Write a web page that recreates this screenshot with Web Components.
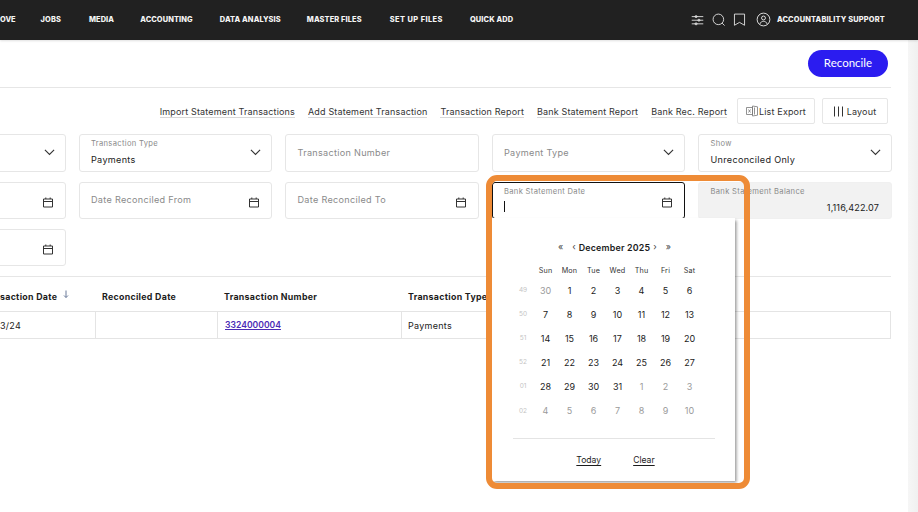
<!DOCTYPE html>
<html lang="en">
<head>
<meta charset="utf-8">
<title>Bank Reconciliation</title>
<style>
  html, body { margin: 0; height: 100%; overflow: hidden; background: #fff; }
  body { font-family: Inter, "Liberation Sans", sans-serif; color: #222; }
</style>
</head>
<body>
<app-header></app-header>
<rec-page></rec-page>
<highlight-box></highlight-box>

<script>
(() => {
  const ICONS = {
    sliders: '<path d="M1 5h16M1 10h16M1 15h16"/><circle cx="7" cy="5" r="1.4"/><circle cx="11" cy="10" r="1.4"/><circle cx="7" cy="15" r="1.4"/>',
    search: '<circle cx="8.8" cy="8.8" r="7.3"/><path d="m14 14 3.4 3.4"/>',
    bookmark: '<path d="M2 1.5h14V17l-7-4-7 4z"/>',
    user: '<circle cx="10" cy="10" r="8.5"/><circle cx="10" cy="8" r="2.6"/><path d="M5.4 15.8c.6-2.3 2.4-3.4 4.6-3.4s4 1.1 4.6 3.4"/>',
    calendar: '<path d="M1.5 3h9v8h-9zM1.5 5.5h9M3.8 1.5V3M8.2 1.5V3"/>',
    chevron: '<path d="m1 1 5 5 5-5"/>'
  };
  const svgIcon = (name, size, vb) => `<svg width="${size}" height="${size}" viewBox="0 0 ${vb} ${vb}" fill="none" stroke="currentColor" aria-hidden="true">${ICONS[name]}</svg>`;

  class AppHeader extends HTMLElement {
    connectedCallback() {
      const nav = ['OVE', 'JOBS', 'MEDIA', 'ACCOUNTING', 'DATA ANALYSIS', 'MASTER FILES', 'SET UP FILES', 'QUICK ADD'];
      const root = this.attachShadow({ mode: 'open' });
      root.innerHTML = `
        <style>
          :host {
            display: flex; align-items: center; height: 40px; box-sizing: border-box; padding-bottom: 1px;
            background: #212121; color: #f4f4f4;
            box-shadow: 0 1px 2px rgba(0,0,0,.12); position: relative; z-index: 2;
            font-family: Inter, "Liberation Sans", sans-serif;
            overflow: hidden;
          }
          nav { display: flex; gap: 27px; margin-left: 0; }
          span { font-size: 7.4px; font-weight: 800; letter-spacing: .12px; white-space: nowrap; }
          nav span:nth-child(1) { margin-right: -2px; letter-spacing: 0; }
          nav span:nth-child(3) { margin-left: 1px; margin-right: -1px; }
          nav span:nth-child(6) { margin-left: -1px; }
          nav span:nth-child(7) { margin-left: 1px; letter-spacing: .45px; }
          .right { display: flex; align-items: center; margin-left: auto; margin-right: 33px; }
          .right svg { display: block; stroke-width: 1.15; }
          .right .gap { margin-right: 8px; }
          .right .mark { margin-right: 10px; }
          .support { margin-left: 6px; letter-spacing: .18px; }
        </style>
        <nav>${nav.map((n) => `<span>${n}</span>`).join('')}</nav>
        <div class="right">
          <div class="gap">${svgIcon('sliders', 13, 18)}</div>
          <div class="gap">${svgIcon('search', 13, 18)}</div>
          <div class="mark">${svgIcon('bookmark', 13, 18)}</div>
          ${svgIcon('user', 15, 20)}
          <span class="support">ACCOUNTABILITY SUPPORT</span>
        </div>`;
    }
  }

  class FilterField extends HTMLElement {
    connectedCallback() {
      const label = this.getAttribute('label') || '';
      const value = this.getAttribute('value');
      const kind = this.getAttribute('kind') || 'text';
      const focused = this.hasAttribute('focused');
      const icon = kind === 'select' ? `<i class="chev">${svgIcon('chevron', 11, 12)}</i>`
        : kind === 'date' ? `<i class="cal">${svgIcon('calendar', 12, 12)}</i>` : '';
      let body;
      if (focused) body = `<small>${label}</small><b class="caret"></b>`;
      else if (kind === 'readonly') body = `<small>${label}</small><em class="num">${value}</em>`;
      else if (value) body = `<small>${label}</small><em>${value}</em>`;
      else body = label ? `<span class="ph">${label}</span>` : '';
      const root = this.attachShadow({ mode: 'open' });
      root.innerHTML = `
        <style>
          :host {
            display: flex; flex-direction: column; justify-content: flex-start; box-sizing: border-box; position: relative;
            border: 1px solid #e6e6e6; border-radius: 3px; padding: 0 11.5px; background: #fff;
            font-family: Inter, "Liberation Sans", sans-serif; min-width: 0;
          }
          :host([kind="readonly"]) { background: #f2f2f2; border-color: #f0f0f0; }
          :host([focused]) { border-color: #111; }
          small { font-size: 7.6px; line-height: 10px; margin-top: 3.5px; letter-spacing: .32px; color: #8a8a8a; white-space: nowrap; }
          em { font-style: normal; font-size: 9.1px; line-height: 13px; margin-top: 4.5px; letter-spacing: .3px; color: #222; white-space: nowrap; }
          em.num { text-align: right; letter-spacing: .1px; }
          .ph { font-size: 9.1px; line-height: 13px; letter-spacing: .3px; color: #8a8a8a; white-space: nowrap; margin-top: 11px; }
          :host([kind="date"]) .ph { margin-top: 10px; }
          b.caret { display: block; width: 1px; height: 11px; background: #111; margin-top: 4.5px; }
          i { position: absolute; color: #333; display: block; }
          i svg { display: block; stroke-width: 1; }
          .chev { top: 14px; right: 10px; }
          .chev svg { stroke-width: 1.2; }
          .cal { top: 13px; right: 11px; }
        </style>
        ${body}${icon}<slot></slot>`;
    }
  }

  class DatePopup extends HTMLElement {
    connectedCallback() {
      const weeks = ['49', '50', '51', '52', '01', '02'];
      const days = [30, 1, 2, 3, 4, 5, 6, 7, 8, 9, 10, 11, 12, 13, 14, 15, 16, 17, 18, 19, 20, 21, 22, 23, 24, 25, 26, 27, 28, 29, 30, 31, 1, 2, 3, 4, 5, 6, 7, 8, 9, 10];
      let cells = '<span></span>' + ['Sun', 'Mon', 'Tue', 'Wed', 'Thu', 'Fri', 'Sat'].map((d) => `<span class="dow">${d}</span>`).join('');
      days.forEach((d, i) => {
        if (i % 7 === 0) cells += `<span class="wk">${weeks[i / 7]}</span>`;
        const other = i === 0 || i > 31;
        cells += `<span class="day${other ? ' off' : ''}">${d}</span>`;
      });
      const root = this.attachShadow({ mode: 'open' });
      root.innerHTML = `
        <style>
          :host {
            display: block; position: absolute; left: -1px; top: 35px; width: 243px; height: 263px; box-sizing: border-box;
            background: #fff; padding: 21px 0 0 21px; z-index: 5;
            box-shadow: 1.5px 1.5px 3px rgba(0,0,0,.42);
            font-family: Inter, "Liberation Sans", sans-serif; color: #1c1c1c;
          }
          .nav { display: flex; align-items: center; justify-content: center; height: 16px; width: 202px; margin-left: 1px; margin-bottom: 7px; font-size: 9px; color: #444; }
          .nav b { font-size: 8.9px; font-weight: 600; letter-spacing: .2px; color: #1c1c1c; margin: 0 3px; white-space: nowrap; }
          .nav span { line-height: 16px; }
          .nav .l2 { margin-right: 9px; }
          .nav .r2 { margin-left: 9px; }
          .grid { display: grid; grid-template-columns: 21px repeat(7, 24px); grid-template-rows: 16px repeat(6, 24.1px); place-items: center; font-size: 9px; }
          .dow { font-size: 7.2px; letter-spacing: .2px; color: #333; }
          .wk { font-size: 6.5px; color: #c4c4c4; }
          .off { color: #9a9a9a; }
          hr { width: 202px; margin: 15px 0 0; border: 0; border-top: 1px solid #e4e4e4; }
          .foot { display: flex; justify-content: center; gap: 32px; width: 202px; height: 43px; align-items: center; padding-left: 4px; box-sizing: border-box; }
          .foot a { font-size: 8.6px; color: #1c1c1c; text-decoration: underline; text-underline-offset: 2px; }
        </style>
        <div class="nav"><span class="l2">«</span><span>‹</span><b>December 2025</b><span>›</span><span class="r2">»</span></div>
        <div class="grid">${cells}</div>
        <hr>
        <div class="foot"><a>Today</a><a>Clear</a></div>`;
    }
  }

  class ToolLink extends HTMLElement {
    connectedCallback() {
      this.attachShadow({ mode: 'open' }).innerHTML = `
        <style>
          :host { display: inline-block; font-size: 9px; letter-spacing: .16px; color: #333; white-space: nowrap; border-bottom: 1px solid #d8d8d8; line-height: 10px; padding-top: 2px; }
        </style><slot></slot>`;
    }
  }

  class ToolButton extends HTMLElement {
    connectedCallback() {
      this.attachShadow({ mode: 'open' }).innerHTML = `
        <style>
          :host { display: inline-flex; align-items: center; justify-content: center; gap: 4px; box-sizing: border-box; height: 26px; border: 1px solid #e6e6e6; border-radius: 2px; font-size: 9px; letter-spacing: .16px; color: #333; white-space: nowrap; background: #fff; }
          :host([tight]) { gap: 0; }
        </style><slot name="icon"></slot><slot></slot>`;
    }
  }

  class RecTable extends HTMLElement {
    connectedCallback() {
      const root = this.attachShadow({ mode: 'open' });
      root.innerHTML = `
        <style>
          :host { display: grid; grid-template-columns: 95px 122px 184px 1fr; grid-template-rows: 34px 28px; font-family: Inter, "Liberation Sans", sans-serif; color: #222; }
          div { display: flex; align-items: center; padding: 0 7px; white-space: nowrap; box-sizing: border-box; font-size: 9px; letter-spacing: .28px; min-width: 0; }
          .h { font-weight: 700; font-size: 8.8px; letter-spacing: .3px; color: #1c1c1c; padding-top: 5px; }
          .c { border-top: 1px solid #e4e4e4; border-bottom: 1px solid #e4e4e4; border-left: 1px solid #e4e4e4; padding-left: 6px; }
          .c:last-child { border-right: 1px solid #e4e4e4; }
          .first { padding-left: 0; border-left: 0; }
          a { color: #4b2bb5; text-decoration: underline; font-weight: 600; font-size: 8.6px; letter-spacing: 0; margin-left: 1px; }
          svg { margin: -4px 0 0 6px; }
        </style>
        <div class="h first">saction Date<svg width="6" height="9" viewBox="0 0 6 9" fill="none" stroke="#6a7b9a"><path d="M3 .5v7M1 5.5l2 2 2-2"/></svg></div>
        <div class="h">Reconciled Date</div>
        <div class="h">Transaction Number</div>
        <div class="h">Transaction Type</div>
        <div class="c first">3/24</div>
        <div class="c"></div>
        <div class="c"><a>3324000004</a></div>
        <div class="c">Payments</div>`;
    }
  }

  class RecPage extends HTMLElement {
    connectedCallback() {
      const root = this.attachShadow({ mode: 'open' });
      root.innerHTML = `
        <style>
          :host { display: block; position: relative; height: 472px; overflow: hidden; font-family: Inter, "Liberation Sans", sans-serif; }
          .scroll { position: absolute; right: 0; top: 0; bottom: 0; width: 10px; background: linear-gradient(90deg, #f6f6f6, #f0f0f0); }
          main { width: 891px; }
          .top { display: flex; justify-content: flex-end; height: 48px; box-sizing: border-box; padding: 10px 3px 0 0; border-bottom: 1px solid #e6e6e6; }
          .reconcile { width: 80px; height: 27px; text-align: center; border-radius: 14px; background: #2b1cf0; color: #fff; font: 400 11.5px/26px Lato, "Liberation Sans", sans-serif; }
          .tools { display: flex; align-items: center; justify-content: flex-end; gap: 13px; height: 26px; margin-top: 10px; padding-right: 3px; }
          .tools tool-button:first-of-type { margin-left: -3px; width: 78px; }
          .tools tool-button:last-of-type { margin-left: -6px; width: 66px; }
          .filters { display: grid; grid-template-columns: repeat(5, 193.5px); grid-template-rows: 37.5px 36.5px 37px; gap: 10.5px 13px; margin: 10px 0 0 -128px; }
          .rule { height: 0; border-top: 1px solid #e6e6e6; margin-top: 10px; }
        </style>
        <div class="scroll"></div>
        <main>
          <div class="top"><div class="reconcile">Reconcile</div></div>
          <div class="tools">
            <tool-link>Import Statement Transactions</tool-link>
            <tool-link>Add Statement Transaction</tool-link>
            <tool-link>Transaction Report</tool-link>
            <tool-link>Bank Statement Report</tool-link>
            <tool-link>Bank Rec. Report</tool-link>
            <tool-button tight>
              <svg slot="icon" width="13" height="12" viewBox="0 0 13 12" fill="none" stroke="#777" stroke-width=".8"><path d="M.5 2.5h6v7h-6zM6.500 1l5 .8v8.400l-5 .8zM8.500 2.500v7"/><path d="m2.500 4.500 2 3M4.500 4.500l-2 3"/></svg>
              List Export
            </tool-button>
            <tool-button>
              <svg slot="icon" width="9" height="11" viewBox="0 0 9 11" fill="none" stroke="#333"><path d="M.5.500v10M4.500.500v10M8.500.500v10"/></svg>
              Layout
            </tool-button>
          </div>
          <div class="filters">
            <filter-field kind="select"></filter-field>
            <filter-field kind="select" label="Transaction Type" value="Payments"></filter-field>
            <filter-field label="Transaction Number"></filter-field>
            <filter-field kind="select" label="Payment Type"></filter-field>
            <filter-field kind="select" label="Show" value="Unreconciled Only"></filter-field>
            <filter-field kind="date"></filter-field>
            <filter-field kind="date" label="Date Reconciled From"></filter-field>
            <filter-field kind="date" label="Date Reconciled To"></filter-field>
            <filter-field kind="date" label="Bank Statement Date" focused><date-popup></date-popup></filter-field>
            <filter-field kind="readonly" label="Bank Statement Balance" value="1,116,422.07"></filter-field>
            <filter-field kind="date"></filter-field>
          </div>
          <div class="rule"></div>
          <rec-table></rec-table>
        </main>`;
    }
  }

  // orange annotation drawn over the screenshot
  class HighlightBox extends HTMLElement {
    connectedCallback() {
      this.attachShadow({ mode: 'open' }).innerHTML = `
        <style>
          :host { position: absolute; left: 486px; top: 175px; width: 264px; height: 314px; box-sizing: border-box; border: 6.5px solid #ee8b36; border-radius: 11px; z-index: 10; pointer-events: none; }
        </style>`;
    }
  }

  customElements.define('app-header', AppHeader);
  customElements.define('filter-field', FilterField);
  customElements.define('date-popup', DatePopup);
  customElements.define('tool-link', ToolLink);
  customElements.define('tool-button', ToolButton);
  customElements.define('rec-table', RecTable);
  customElements.define('rec-page', RecPage);
  customElements.define('highlight-box', HighlightBox);
})();
</script>
</body>
</html>
